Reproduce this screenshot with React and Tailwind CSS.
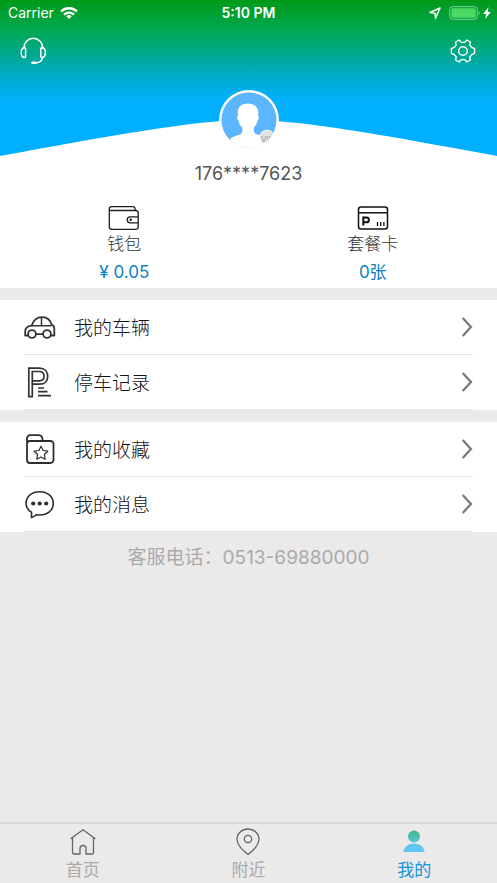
import React from 'react';

const HeadsetIcon = () => (
    <svg className="w-7 h-7" viewBox="0 0 28 28" fill="none" stroke="white" strokeWidth="1.500" strokeLinecap="round">
        <path d="M4 11V10.500a9.300 9.300 0 0 1 18.600 0V11" />
        <path d="M4.600 10.800C2.500 10.800 1.200 12.600 1.200 15.600s1.100 5 3.400 5c.7 0 1-.4 1-1v-7.800c0-.6-.3-1-1-1Z" />
        <path d="M21.800 10.800c2.300 0 3.600 1.800 3.600 4.800s-1.300 5-3.600 5c-.7 0-1-.4-1-1v-7.800c0-.6.3-1 1-1Z" />
        <path d="M22.500 20.600c-.6 3.200-2.500 5-6.200 5.200" />
        <path d="M12.500 25.800h3" strokeWidth="2.600" />
    </svg>
);

const GearIcon = () => (
    <svg className="w-7 h-7" viewBox="0 0 28 28" fill="none" stroke="white" strokeWidth="1.400" strokeLinejoin="round">
        <path d="M10.100 3 12.100 5.200Q14 5.800 15.900 5.200L17.900 3 21.400 5 20.800 8.100Q21.800 9.500 22.700 10.300L25.600 11.700V16.300L22.700 17.700Q21.800 18.500 20.800 19.900L21.400 23 17.900 25 15.900 22.800Q14 22.200 12.100 22.800L10.100 25 6.600 23 7.200 19.900Q6.200 18.500 5.300 17.700L2.400 16.300V11.700L5.300 10.300Q6.200 9.500 7.200 8.100L6.600 5Z" />
        <circle cx="14" cy="14" r="4.300" />
    </svg>
);

const WalletIcon = () => (
    <svg className="w-8 h-6" viewBox="0 0 32 24" fill="none" stroke="#1c1c1c" strokeWidth="1.300" strokeLinejoin="round">
        <path d="M27 4.500V2.500A1.800 1.800 0 0 0 25.200.7H3.500A2.300 2.300 0 0 0 1.300 3v18a2.300 2.300 0 0 0 2.300 2.300h24.300a2.300 2.300 0 0 0 2.300-2.300V6.800a2.300 2.300 0 0 0-2.300-2.300H2" />
        <path d="M30.200 10.800h-8a3 3 0 0 0 0 6h8" />
        <circle cx="22.700" cy="13.800" r="1.200" fill="#1c1c1c" stroke="none" />
    </svg>
);

const CardIcon = () => (
    <svg className="w-8 h-6" viewBox="0 0 32 24" fill="none" stroke="#111" strokeWidth="1.500">
        <rect x="1.500" y="1" width="29" height="22" rx="2.500" />
        <path d="M1.500 6.800h29" />
        <path d="M6.300 19.500v-8h3.200a2.300 2.300 0 0 1 0 4.800H6.300" strokeWidth="2" />
        <path d="M20.500 16v4M23.700 16v4M26.900 16v4" strokeWidth="1.300" />
    </svg>
);

const CarIcon = () => (
    <svg className="w-8 h-8" viewBox="0 0 32 32" fill="none" stroke="#333" strokeWidth="1.800" strokeLinejoin="round">
        <path d="M4 24.500H1.200V20.500c0-3.500 2.500-5.300 6.300-5.800C9.500 9 12.500 6.200 18 6.200c5.200 0 8.200 2.500 9.500 7.300 2 .7 2.800 1.800 2.800 4v7h-3.300M12 23.200h7" />
        <path d="M7.500 14.700h20M17.500 6.500v8" strokeWidth="1.500" />
        <circle cx="8" cy="23" r="3.900" />
        <circle cx="23" cy="23" r="3.900" />
    </svg>
);

const ParkingIcon = () => (
    <svg className="w-8 h-8" viewBox="0 0 32 32" fill="none" stroke="#333" strokeWidth="1.700">
        <path d="M4.800 2.200h10.700c5.500 0 8.200 3.500 8.200 8s-2.900 8-8.200 8H8.300v12.500H4.800Z" />
        <path d="M8.300 18.200V5.500h7c3 0 4.700 1.800 4.700 4.700 0 2.800-1.700 4.600-4.700 4.600H8.300" />
        <path d="M14 22h6M14 25.700h9.500M14 29.700h13" />
    </svg>
);

const FavoriteIcon = () => (
    <svg className="w-8 h-8" viewBox="0 0 32 32" fill="none" stroke="#2d2d2d" strokeWidth="1.800" strokeLinejoin="round">
        <path d="M3 9V5.200A3 3 0 0 1 6 2.200h8.500c2.400 0 3.700 1.300 4 3.800l.2 2H26.500a3 3 0 0 1 3 3V27a3 3 0 0 1-3 3H6a3 3 0 0 1-3-3V11c0-2 1-3 3-3h13" />
        <path d="m17 13.200 2.100 4.300 4.700.7-3.400 3.300.8 4.700-4.200-2.200-4.200 2.200.8-4.700-3.400-3.300 4.700-.7Z" strokeWidth="1.200" />
    </svg>
);

const MessageIcon = () => (
    <svg className="w-8 h-8" viewBox="0 0 32 32" fill="none" stroke="#2d2d2d" strokeWidth="1.600" strokeLinejoin="round">
        <path d="M7.500 29.500v-5.300C4 22.200 2 19.200 2 15.500 2 8.500 8 3.700 15.700 3.700s13.600 4.800 13.600 11.800-6 11.500-13.600 11.500c-1.300 0-2.500-.1-3.500-.3-1.300 1.500-2.900 2.500-4.700 2.800Z" />
        <g fill="#2d2d2d" stroke="none">
            <circle cx="9.200" cy="15.500" r="2.100" />
            <circle cx="15.700" cy="15.500" r="2.100" />
            <circle cx="22.200" cy="15.500" r="2.100" />
        </g>
    </svg>
);

const HomeIcon = () => (
    <svg className="w-7 h-7" viewBox="0 0 28 28" fill="none" stroke="#666" strokeWidth="1.300" strokeLinecap="round" strokeLinejoin="round">
        <path d="M2 10.500 14 1.700l12 8.800" />
        <path d="M3.500 9.800v14.800c0 .8.500 1.400 1.300 1.400H11v-5.500a3 3 0 0 1 6 0V26h6.200c.8 0 1.300-.6 1.300-1.400V9.800" />
    </svg>
);

const PinIcon = () => (
    <svg className="w-7 h-7" viewBox="0 0 28 28" fill="none" stroke="#666" strokeWidth="1.300" strokeLinejoin="round">
        <path d="M14 26.500C8 21.500 3 17 3 11.300 3 5.400 7.900 1 14 1s11 4.400 11 10.300c0 5.700-5 10.200-11 15.200Z" />
        <circle cx="14" cy="11" r="3.700" />
    </svg>
);

const UserIcon = () => (
    <svg className="w-7 h-7" viewBox="0 0 28 28" fill="url(#userFill)">
        <defs>
            <linearGradient id="userFill" x1="0" y1="2" x2="0" y2="22" gradientUnits="userSpaceOnUse">
                <stop offset="0" stopColor="#3fb87a" />
                <stop offset="0.700" stopColor="#5cc6e8" />
                <stop offset="1" stopColor="#63c5f8" />
            </linearGradient>
        </defs>
        <circle cx="14" cy="8.500" r="6" />
        <path d="M3.300 24c.8-5 4.800-8.500 10.700-8.500S23.900 19 24.700 24Z" />
    </svg>
);

const Chevron = () => (
    <svg className="w-3 h-5" viewBox="0 0 12 20" fill="none" stroke="#777" strokeWidth="2.200">
        <path d="m1.700 1 8.300 9-8.300 9" />
    </svg>
);

const StatusBar = () => (
    <div className="relative flex justify-between items-center h-[26px] pl-2 pr-1.5">
        <div className="flex items-center gap-1.5">
            <span className="text-sm">Carrier</span>
            <svg className="w-[18px] h-3" viewBox="0 0 18 12" fill="none" stroke="white" strokeWidth="2.400">
                <path d="M1 4.500a11.300 11.300 0 0 1 16 0M4 7.700a7 7 0 0 1 10 0" />
                <path d="M6.200 9.300a4 4 0 0 1 5.600 0L9 12Z" fill="white" stroke="none" />
            </svg>
        </div>
        <span className="absolute inset-x-0 text-center text-sm font-semibold">5:10 PM</span>
        <div className="flex items-center gap-0.5">
            <svg className="w-3 h-3 mr-1.5" viewBox="0 0 12 12" fill="none" stroke="white" strokeWidth="1.500" strokeLinejoin="round">
                <path d="M11 1 1 5.500l5 .7.500 5Z" />
            </svg>
            <svg className="w-8 h-[14px]" viewBox="0 0 32 14">
                <rect x="0.700" y="0.700" width="27.600" height="12.600" rx="3" fill="none" stroke="white" strokeOpacity="0.500" />
                <rect x="2.300" y="2.300" width="24.400" height="9.400" rx="1.500" fill="#4cd964" />
                <path d="M29.700 4.800c1.300.5 1.300 3.900 0 4.400Z" fill="white" fillOpacity="0.500" />
            </svg>
            <svg className="w-2 h-3" viewBox="0 0 8 12" fill="white">
                <path d="M5.500 0 .2 7h3L2.200 12 7.800 5H4.700Z" />
            </svg>
        </div>
    </div>
);

const Avatar = () => (
    <svg className="w-[60px] h-[60px]" viewBox="0 0 60 60">
        <defs>
            <clipPath id="avatarClip">
                <circle cx="30" cy="30" r="27.500" />
            </clipPath>
        </defs>
        <circle cx="30" cy="30" r="30" fill="white" />
        <g clipPath="url(#avatarClip)">
            <rect width="60" height="60" fill="#5bb5ff" />
            <path d="M28.500 13.500C22.500 13.500 18.800 17 18.800 22v4c-1 .5-.8 3.500.6 4.500.6 3.500 2 5.500 3.800 7 .5 4 .2 6-3 7.300C15 46.500 11.500 47 10.500 51v9H46V46.500c-3.500-.5-6.500-1.200-9-2.500-2-1.200-2.500-3-2.200-6.500 1.800-1.500 3.200-3.500 3.800-7 1.400-1 1.600-4 .6-4.500v-4c0-5-4.500-8.500-10.700-8.500Z" fill="white" />
            <rect y="52" width="60" height="8" fill="white" />
            <circle cx="48" cy="47.500" r="7.500" fill="#e3e3e3" stroke="white" strokeWidth="0.800" />
            <text x="42" y="52" fontSize="8" fontFamily="Inter, sans-serif" fill="#999">VIP</text>
            <path d="M40 54h20v6H40Z" fill="white" />
        </g>
    </svg>
);

const MenuItem = ({ icon, label }) => (
    <li>
        <a href="#" className="flex items-center h-[55px] mx-6 border-b border-[#e4e4e4]">
            {icon}
            <span className="ml-[18px] pt-1 flex-1 text-[#111]">{label}</span>
            <Chevron />
        </a>
    </li>
);

const menuGroups = [
    [
        { label: '我的车辆', icon: <CarIcon /> },
        { label: '停车记录', icon: <ParkingIcon /> },
    ],
    [
        { label: '我的收藏', icon: <FavoriteIcon /> },
        { label: '我的消息', icon: <MessageIcon /> },
    ],
];

const tabs = [
    { label: '首页', icon: <HomeIcon /> },
    { label: '附近', icon: <PinIcon /> },
    { label: '我的', icon: <UserIcon />, active: true },
];

const App = () => {
    return (
        <div className="min-h-screen flex flex-col bg-[#ebe9ea] font-['Inter','Noto_Sans_CJK_SC',sans-serif]">
            <header className="relative h-[156px] text-white bg-[linear-gradient(#009a18_0px,#00a850_30px,#00abd2_80px,#00b0ff_102px)]">
                <StatusBar />
                <div className="flex justify-between items-center h-[50px] px-5">
                    <button type="button" aria-label="客服">
                        <HeadsetIcon />
                    </button>
                    <button type="button" aria-label="设置">
                        <GearIcon />
                    </button>
                </div>
                <svg className="absolute bottom-0 w-full h-9" viewBox="0 0 497 36" preserveAspectRatio="none" fill="white">
                    <path d="M0 36C130 12 200 0 248.500 0S367 12 497 36Z" />
                </svg>
                <div className="absolute top-[90px] inset-x-0 flex justify-center">
                    <Avatar />
                </div>
            </header>

            <section className="bg-white pb-1 text-center">
                <p className="pt-1 text-lg leading-7 text-[#555]">176****7623</p>
                <div className="grid grid-cols-2 pt-[18px] text-[17px] leading-6">
                    <a href="#" className="flex flex-col items-center">
                        <WalletIcon />
                        <span className="pt-0.5 font-light text-[#333]">钱包</span>
                        <span className="pt-1 text-[#0a7fc8]">¥ 0.05</span>
                    </a>
                    <a href="#" className="flex flex-col items-center">
                        <CardIcon />
                        <span className="pt-0.5 font-light text-[#333]">套餐卡</span>
                        <span className="pt-1 text-[#0a7fc8]">0张</span>
                    </a>
                </div>
            </section>

            <main className="flex-1">
                {menuGroups.map((group, i) => (
                    <ul key={i} className="mt-3 bg-white text-[19px] leading-7 font-light">
                        {group.map((item) => (
                            <MenuItem key={item.label} icon={item.icon} label={item.label} />
                        ))}
                    </ul>
                ))}
                <p className="pt-3 text-center text-[19px] leading-7 text-[#aaa]">客服电话：0513-69880000</p>
            </main>

            <nav className="grid grid-cols-3 h-[61px] pt-1 border-t-2 border-[#d8d6d7] text-[17px] leading-6">
                {tabs.map((tab) => (
                    <a
                        key={tab.label}
                        href="#"
                        className={`flex flex-col items-center ${tab.active ? 'text-[#1296db]' : 'text-[#aaa]'}`}
                    >
                        {tab.icon}
                        <span className="pt-0.5">{tab.label}</span>
                    </a>
                ))}
            </nav>
        </div>
    );
};

export default App;
